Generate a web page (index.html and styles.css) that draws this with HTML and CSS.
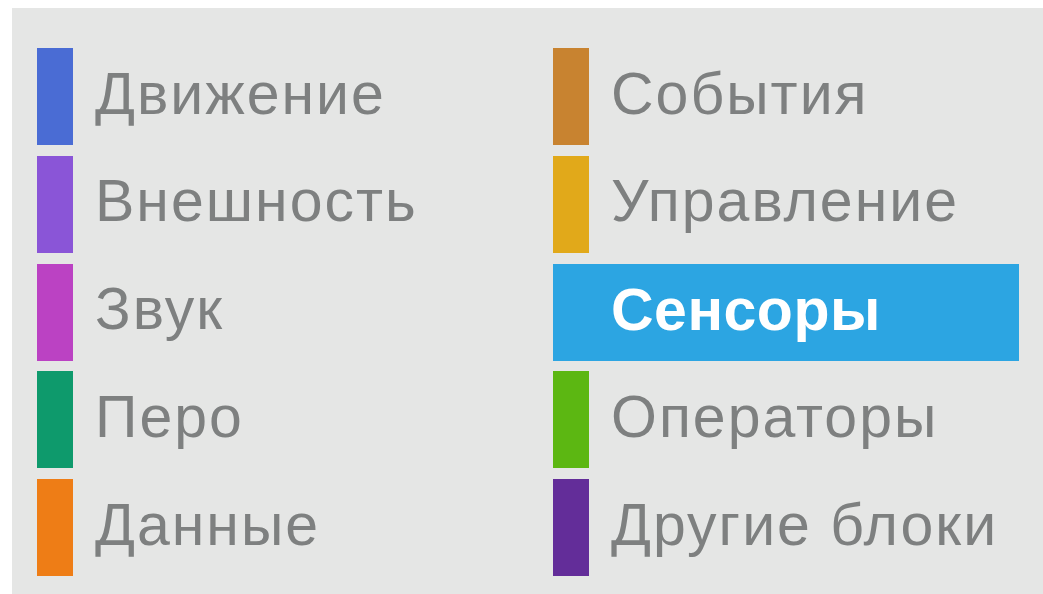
FILE: index.html
```html
<!DOCTYPE html>
<html lang="ru">
<head>
<meta charset="utf-8">
<title>Категории блоков</title>
<link rel="stylesheet" href="styles.css">
</head>
<body>
  <nav class="palette">
    <ul class="categories">
      <li class="cat cat-motion"><span class="swatch"></span><span class="label">Движение</span></li>
      <li class="cat cat-events"><span class="swatch"></span><span class="label">События</span></li>
      <li class="cat cat-looks"><span class="swatch"></span><span class="label">Внешность</span></li>
      <li class="cat cat-control"><span class="swatch"></span><span class="label">Управление</span></li>
      <li class="cat cat-sound"><span class="swatch"></span><span class="label">Звук</span></li>
      <li class="cat cat-sensing is-selected"><span class="swatch"></span><span class="label">Сенсоры</span></li>
      <li class="cat cat-pen"><span class="swatch"></span><span class="label">Перо</span></li>
      <li class="cat cat-operators"><span class="swatch"></span><span class="label">Операторы</span></li>
      <li class="cat cat-data"><span class="swatch"></span><span class="label">Данные</span></li>
      <li class="cat cat-more"><span class="swatch"></span><span class="label">Другие блоки</span></li>
    </ul>
  </nav>
</body>
</html>
```

FILE: styles.css
```css
html, body {
  margin: 0;
  padding: 0;
  background: #ffffff;
}

body {
  padding: 8px 0 0 12px;
  height: 594px;
  box-sizing: border-box;
  overflow: hidden;
}

.palette {
  background: #e5e6e5;
  height: 586px;
  padding: 40px 0 0 25px;
  box-sizing: border-box;
}

.categories {
  list-style: none;
  margin: 0;
  padding: 0;
  display: grid;
  grid-template-columns: 466px 466px;
  grid-auto-rows: 97px;
  column-gap: 50px;
  row-gap: 10.75px;
}

.cat {
  --cat-color: #888;
  display: flex;
  align-items: center;
  gap: 22px;
  font-family: "Liberation Sans", Arial, sans-serif;
  font-size: 59px;
  letter-spacing: 2px;
  color: #7e8080;
}

.swatch {
  flex: none;
  width: 36px;
  align-self: stretch;
  background: var(--cat-color);
}

.label {
  white-space: nowrap;
  padding-bottom: 6px;
}

.cat.is-selected {
  background: var(--cat-color);
  color: #ffffff;
  font-weight: bold;
  letter-spacing: 0.5px;
}

.cat.is-selected .label {
  padding-bottom: 4px;
}

.cat-motion    { --cat-color: #4a6cd4; }
.cat-looks     { --cat-color: #8a55d7; }
.cat-sound     { --cat-color: #bb42c3; }
.cat-pen       { --cat-color: #0e9a6c; }
.cat-data      { --cat-color: #ee7d16; }
.cat-events    { --cat-color: #c88330; }
.cat-control   { --cat-color: #e1a91a; }
.cat-sensing   { --cat-color: #2ca5e2; }
.cat-operators { --cat-color: #5cb712; }
.cat-more      { --cat-color: #632d99; }
```
